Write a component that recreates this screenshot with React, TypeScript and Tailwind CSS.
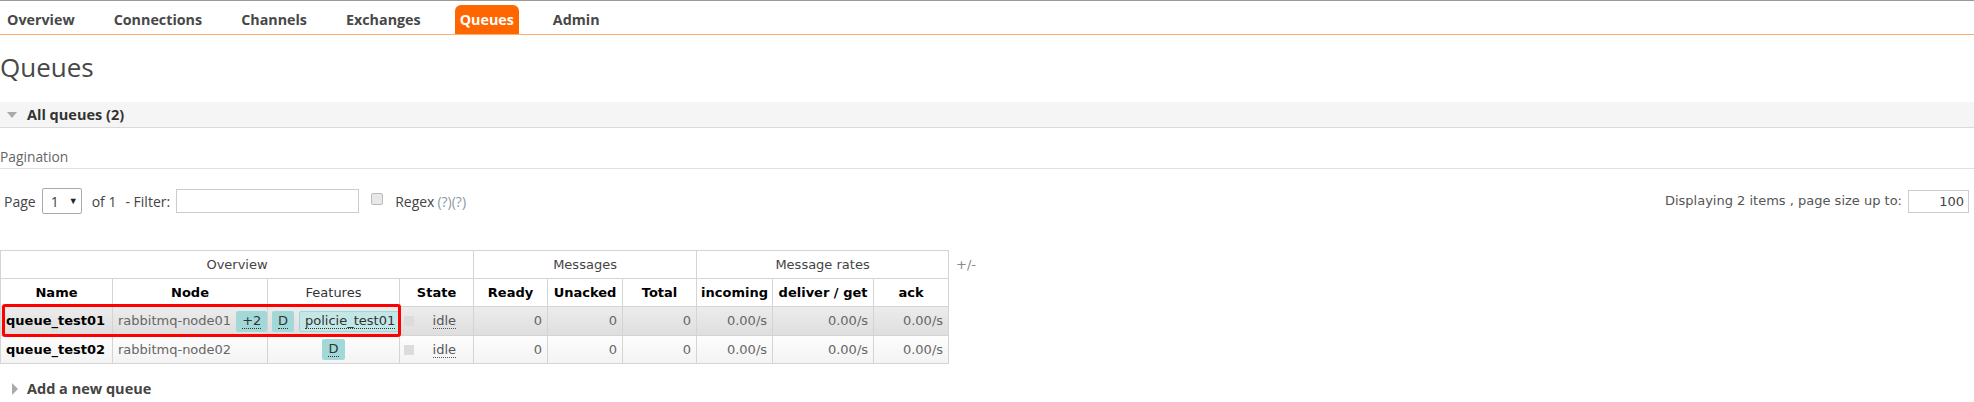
import type { ReactNode } from 'react'

const NAV = ['Overview', 'Connections', 'Channels', 'Exchanges', 'Queues', 'Admin']

const HEAD = "font-['Open_Sans',sans-serif]"
const BODY = "font-['DejaVu_Sans',Verdana,sans-serif]"

function Badge({ children, wide }: { children: ReactNode; wide?: boolean }) {
  return (
    <span
      className={`inline-flex items-center h-[21px] rounded-[2px] text-[#333] align-middle ${
        wide ? 'px-[5px] bg-[#c3e7e7] border border-[#9fd6d6]' : 'px-[6px] bg-[#a3d8d8]'
      }`}
    >
      <span className="border-b border-dotted border-[#333] leading-[14px]">{children}</span>
    </span>
  )
}

function Idle() {
  return (
    <div className="flex items-center justify-between pl-[4px] pr-[17px]">
      <span className="inline-block w-[10px] h-[10px] bg-[#dcdcdc]" />
      <span className="text-[#555] border-b border-dotted border-[#555] leading-[15px]">idle</span>
    </div>
  )
}

const rows = [
  { name: 'queue_test01', node: 'rabbitmq-node01', extra: true, row: 'h-[29px] bg-linear-to-b from-[#ececec] to-[#dedede]' },
  { name: 'queue_test02', node: 'rabbitmq-node02', extra: false, row: 'h-[28px] bg-linear-to-b from-[#fdfdfd] to-[#f3f3f3]' },
]

const cell = 'border border-[#d4d4d4] p-0'

export default function App() {
  return (
    <div className="w-[1974px] h-[402px] bg-white overflow-hidden">
      <div className="h-px bg-[#9a9a9a]" />

      <nav className={`${HEAD} flex items-end gap-[29px] pl-[2px] h-[34px] border-b border-[#fbb06a]`}>
        {NAV.map((n) => (
          <span
            key={n}
            className={`px-[5px] h-[29px] leading-[29px] text-[14.3px] font-bold rounded-t-[6px] ${
              n === 'Queues' ? 'bg-[#ff6600] text-white' : 'text-[#484848]'
            }`}
          >
            {n}
          </span>
        ))}
      </nav>

      <h1 className={`${HEAD} text-[26px] leading-[35px] text-[#484848] mt-[15px]`}>Queues</h1>

      <div className={`${HEAD} mt-[17px] h-[26px] bg-[#f5f5f5] border-b border-[#dadada] flex items-center`}>
        <span className="ml-[7px] w-0 h-0 border-l-[5px] border-r-[5px] border-t-[6px] border-l-transparent border-r-transparent border-t-[#aaaaaa]" />
        <span className="ml-[10px] text-[14.5px] font-bold text-[#333]">All queues (2)</span>
      </div>

      <div className={`${HEAD} mt-[19px] text-[13.8px] text-[#666] leading-[20px] pb-[1px] border-b border-[#e0e0e0]`}>
        Pagination
      </div>

      <div className={`${HEAD} mt-[19px] flex items-center justify-between h-[26px] text-[14px] text-[#444]`}>
        <div className="flex items-center">
          <span className="ml-[4px]">Page</span>
          <span className="ml-[6px] w-[40px] h-[26px] border border-[#aaa] rounded-[2px] flex items-center pl-[8px] gap-[10px]">
            <span>1</span>
            <span className="text-[9px] text-[#222]">▼</span>
          </span>
          <span className="ml-[10px]">of 1</span>
          <span className="ml-[9px]">- Filter:</span>
          <span className="ml-[6px] w-[183px] h-[24px] border border-[#ccc]" />
          <span className="ml-[12px] w-[12px] h-[12px] border border-[#bbb] bg-[#e8e8e8] rounded-[2px] -mt-[4px]" />
          <span className="ml-[12px]">Regex</span>
          <span className="ml-[3px] text-[#8a9ba8]">(?)(?)</span>
        </div>
        <div className={`${BODY} flex items-center text-[13px] text-[#555]`}>
          <span>Displaying 2 items , page size up to:</span>
          <span className="ml-[6px] mr-[5px] w-[61px] h-[23px] border border-[#ccc] text-right pr-[4px] leading-[21px] text-[#444]">
            100
          </span>
        </div>
      </div>

      <div className={`${BODY} relative mt-[36px] flex items-start text-[13px] leading-[18px]`}>
        <table className="border-collapse border border-[#d4d4d4] table-fixed w-[948px]">
          <colgroup>
            <col className="w-[112px]" />
            <col className="w-[155px]" />
            <col className="w-[132px]" />
            <col className="w-[74px]" />
            <col className="w-[74px]" />
            <col className="w-[75px]" />
            <col className="w-[74px]" />
            <col className="w-[76px]" />
            <col className="w-[101px]" />
            <col className="w-[75px]" />
          </colgroup>
          <thead>
            <tr className="h-[28px] text-[#444]">
              <th colSpan={4} className={`${cell} font-normal`}>Overview</th>
              <th colSpan={3} className={`${cell} font-normal`}>Messages</th>
              <th colSpan={3} className={`${cell} font-normal`}>Message rates</th>
            </tr>
            <tr className="h-[28px] text-black">
              <th className={cell}>Name</th>
              <th className={cell}>Node</th>
              <th className={`${cell} font-normal text-[#333]`}>Features</th>
              <th className={cell}>State</th>
              <th className={cell}>Ready</th>
              <th className={cell}>Unacked</th>
              <th className={cell}>Total</th>
              <th className={`${cell} whitespace-nowrap`}>incoming</th>
              <th className={`${cell} whitespace-nowrap`}>deliver / get</th>
              <th className={cell}>ack</th>
            </tr>
          </thead>
          <tbody>
            {rows.map((r) => (
              <tr key={r.name} className={r.row}>
                <td className={`${cell} pl-[5px] font-bold text-black whitespace-nowrap`}>{r.name}</td>
                <td className={`${cell} pl-[5px] text-[#666] whitespace-nowrap`}>
                  <div className="flex items-center">
                    {r.node}
                    {r.extra && (
                      <span className="ml-[5px] flex">
                        <Badge>+2</Badge>
                      </span>
                    )}
                  </div>
                </td>
                <td className={`${cell} whitespace-nowrap`}>
                  {r.extra ? (
                    <div className="flex items-center pl-[4px] gap-[5px]">
                      <Badge>D</Badge>
                      <Badge wide>policie_test01</Badge>
                    </div>
                  ) : (
                    <div className="flex justify-center">
                      <Badge>D</Badge>
                    </div>
                  )}
                </td>
                <td className={cell}>
                  <Idle />
                </td>
                {['0', '0', '0', '0.00/s', '0.00/s', '0.00/s'].map((v, j) => (
                  <td key={j} className={`${cell} text-right pr-[5px] text-[#666]`}>
                    {v}
                  </td>
                ))}
              </tr>
            ))}
          </tbody>
        </table>
        <span className="ml-[7px] mt-[6px] text-[#888]">+/-</span>

        <div className="absolute left-[2px] top-[54px] w-[399px] h-[33px] border-[3px] border-[#ff0000] rounded-[3px] pointer-events-none" />
      </div>

      <div className={`${HEAD} mt-[14px] flex items-center`}>
        <span className="ml-[12px] w-0 h-0 border-t-[6px] border-b-[6px] border-l-[6px] border-t-transparent border-b-transparent border-l-[#aaaaaa]" />
        <span className="ml-[9px] text-[14.5px] font-bold text-[#444]">Add a new queue</span>
      </div>
    </div>
  )
}
